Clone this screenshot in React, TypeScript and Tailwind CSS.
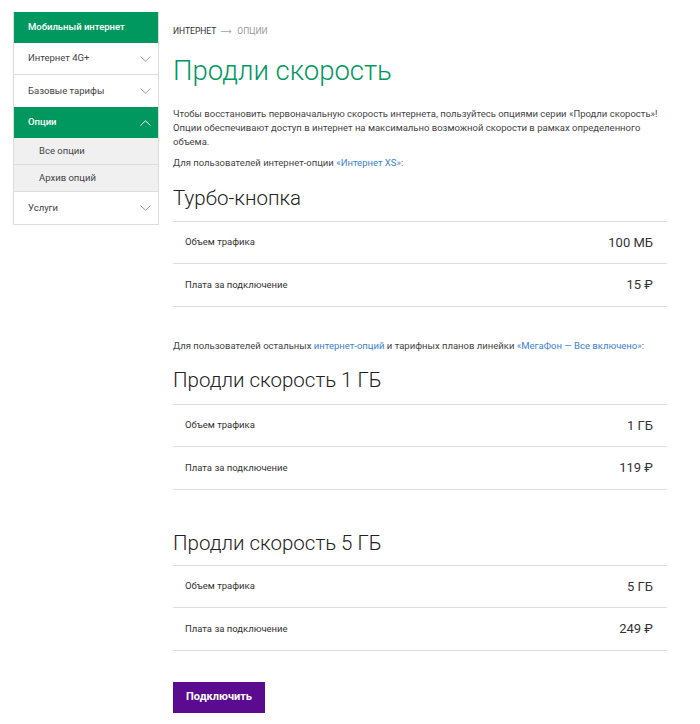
import React from "react"

const Chevron = ({ up = false, className = "" }: { up?: boolean; className?: string }) => (
  <svg className={className} width="11" height="6" viewBox="0 0 11 6" fill="none" stroke="currentColor" strokeWidth={1}>
    {up ? <path d="M0.5 5.5 L5.5 0.8 L10.5 5.5" /> : <path d="M0.5 0.5 L5.5 5.2 L10.5 0.5" />}
  </svg>
)

interface Row {
  label: string
  value: string
}

const Table = ({ rows }: { rows: Row[] }) => (
  <div className="border-t border-[#dcdcdc]">
    {rows.map(r => (
      <div key={r.label} className="flex h-[42.5px] items-center justify-between border-b border-[#dcdcdc] pl-3 pr-[14px]">
        <span className="text-[9.5px] text-[#333]">{r.label}</span>
        <span className="text-[13px] text-[#333]">{r.value}</span>
      </div>
    ))}
  </div>
)

export default function App() {
  return (
    <div className="flex min-h-[724px] bg-white pl-[13px] pt-3 text-[#333]" style={{ fontFamily: "Roboto, 'Noto Sans', sans-serif" }}>
      {/* sidebar */}
      <aside className="w-[146px] shrink-0 self-start border-x border-b border-[#dcdcdc] text-[9.5px] text-[#444]">
        <div className="flex h-[31px] items-center bg-[#00985f] pl-[14px] font-medium text-white">Мобильный интернет</div>
        <div className="flex h-8 items-center justify-between border-b border-[#dcdcdc] pl-[14px] pr-[7px]">
          <span>Интернет 4G+</span>
          <Chevron className="text-[#999]" />
        </div>
        <div className="flex h-8 items-center justify-between pl-[14px] pr-[7px]">
          <span>Базовые тарифы</span>
          <Chevron className="text-[#999]" />
        </div>
        <div className="flex h-[31px] items-center justify-between bg-[#00985f] pl-[14px] pr-[7px] font-medium text-white">
          <span>Опции</span>
          <Chevron up className="text-white" />
        </div>
        <div className="flex h-[27px] items-center border-b border-[#dcdcdc] bg-[#f0f0f0] pl-[25px]">Все опции</div>
        <div className="flex h-[27px] items-center border-b border-[#dcdcdc] bg-[#f0f0f0] pl-[25px]">Архив опций</div>
        <div className="flex h-8 items-center justify-between pl-[14px] pr-[7px]">
          <span>Услуги</span>
          <Chevron className="text-[#999]" />
        </div>
      </aside>

      {/* main */}
      <main className="ml-[14px] w-[494px] pt-[13px]">
        <div className="flex items-center gap-[5px] text-[8.5px] uppercase">
          <span className="text-[#333]">Интернет</span>
          <svg width="11" height="5" viewBox="0 0 11 5" fill="none" stroke="#aaa" strokeWidth={0.9}>
            <path d="M0 2.5 H10 M8 0.6 L10.3 2.5 L8 4.4" />
          </svg>
          <span className="text-[#999]">Опции</span>
        </div>

        <h1 className="mt-[17px] text-[27.5px] font-light leading-8 text-[#00985f]">Продли скорость</h1>

        <p className="mt-[20px] text-[9.5px] leading-[14px] text-[#444]">
          Чтобы восстановить первоначальную скорость интернета, пользуйтесь опциями серии «Продли скорость»!
          Опции обеспечивают доступ в интернет на максимально возможной скорости в рамках определенного объема.
        </p>
        <p className="mt-[7px] text-[9.5px] leading-[14px] text-[#444]">
          Для пользователей интернет-опции <span className="text-[#3b82d6]">«Интернет XS»</span>:
        </p>

        <h2 className="mt-[16px] text-[20.5px] font-light leading-6 text-[#222]">Турбо-кнопка</h2>
        <div className="mt-[11px]">
          <Table rows={[{ label: "Объем трафика", value: "100 МБ" }, { label: "Плата за подключение", value: "15 ₽" }]} />
        </div>

        <p className="mt-[32px] text-[9.5px] leading-[14px] text-[#444]">
          Для пользователей остальных <span className="text-[#3b82d6]">интернет-опций</span> и тарифных планов линейки{" "}
          <span className="text-[#3b82d6]">«МегаФон — Все включено»</span>:
        </p>

        <h2 className="mt-[15px] text-[20.5px] font-light leading-6 text-[#222]">Продли скорость 1 ГБ</h2>
        <div className="mt-[12px]">
          <Table rows={[{ label: "Объем трафика", value: "1 ГБ" }, { label: "Плата за подключение", value: "119 ₽" }]} />
        </div>

        <h2 className="mt-[41px] text-[20.5px] font-light leading-6 text-[#222]">Продли скорость 5 ГБ</h2>
        <div className="mt-[10px]">
          <Table rows={[{ label: "Объем трафика", value: "5 ГБ" }, { label: "Плата за подключение", value: "249 ₽" }]} />
        </div>

        <button className="mt-[31px] h-[31px] w-[92px] bg-[#5a0b8f] text-[11px] font-bold text-white">Подключить</button>
      </main>
    </div>
  )
}
